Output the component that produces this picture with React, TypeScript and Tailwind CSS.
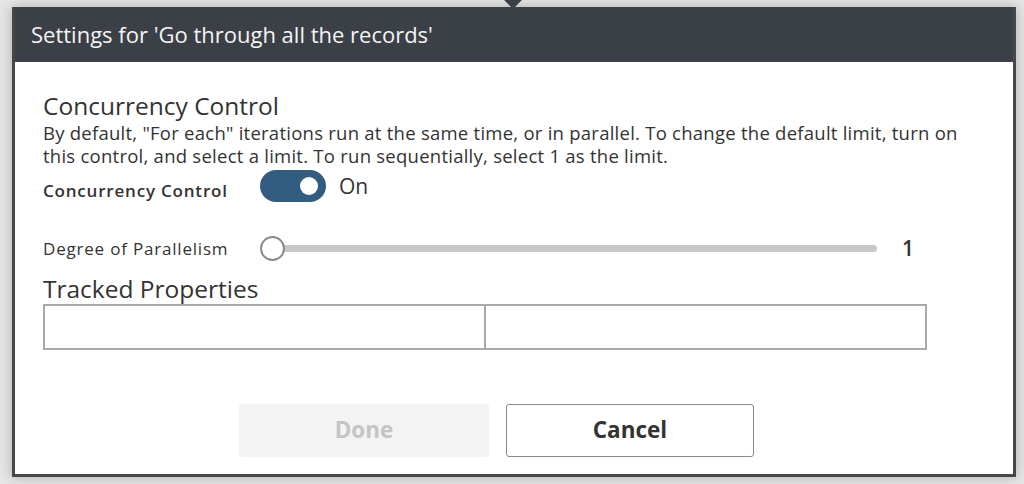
export default function App() {
  return (
    <div className="relative h-[484px] w-[1024px] overflow-hidden bg-[#e6e6e6] pl-[12px] pt-[7px] font-['Open_Sans',sans-serif] text-[#333]">
      {/* pointer above the dialog */}
      <div className="absolute left-[506px] top-[-8px] h-[14px] w-[14px] rotate-45 bg-[#3a3e45]" />
      <div className="flex h-[470px] w-[1004px] flex-col border-[3px] border-t-0 border-[#474747] bg-white shadow-[0_0_12px_rgba(0,0,0,0.25)]">
        <div className="flex h-[55px] shrink-0 items-center bg-[#3b3f46] pl-[16px] text-[22px] text-[#f4f4f4]">
          Settings for 'Go through all the records'
        </div>
        <div className="flex flex-1 flex-col pl-[28px] pr-[20px]">
          <h2 className="mt-[29px] text-[24.5px] leading-[30px]">Concurrency Control</h2>
          <p className="max-w-[945px] text-[18.5px] leading-[23px] tracking-[0.25px]">
            By default, "For each" iterations run at the same time, or in parallel. To change the default limit, turn on this control, and select a limit. To run sequentially, select 1 as the limit.
          </p>
          <div className="mt-[3px] flex h-[32px] w-[884px] items-center">
            <span className="w-[217px] pt-[8px] text-[17px] leading-[23px] font-semibold tracking-[0.8px]">Concurrency Control</span>
            <div className="flex h-[32px] w-[66px] items-center justify-end rounded-full bg-[#335c81] pr-[8px]">
              <div className="h-[18px] w-[18px] rounded-full bg-white" />
            </div>
            <span className="ml-[13px] pb-[1px] text-[21px] leading-[28px]">On</span>
          </div>
          <div className="mt-[31px] flex w-[884px] items-center">
            <span className="w-[217px] text-[17px] tracking-[0.8px]">Degree of Parallelism</span>
            <div className="relative flex flex-1 items-center">
              <div className="z-10 h-[25px] w-[25px] shrink-0 rounded-full border-2 border-[#8a8a8a] bg-white" />
              <div className="-ml-[3px] h-[7px] flex-1 rounded-full bg-[#c8c8c8]" />
            </div>
            <span className="ml-[25px] w-[25px] text-[21px] font-semibold">1</span>
          </div>
          <h2 className="mt-[9px] text-[24.5px] leading-[30px]">Tracked Properties</h2>
          <div className="flex h-[46px] w-[884px]">
            <div className="flex-1 border-2 border-[#a9a9a9]" />
            <div className="flex-1 border-2 border-l-0 border-[#a9a9a9]" />
          </div>
          <div className="mt-[54px] flex gap-[17px] pl-[196px]">
            <button className="h-[53px] w-[250px] rounded-[3px] bg-[#f3f3f3] text-[22.5px] font-bold text-[#c4c4c4]">
              Done
            </button>
            <button className="h-[53px] w-[248px] rounded-[3px] border border-[#8a8a8a] bg-white text-[22.5px] font-bold text-[#333]">
              Cancel
            </button>
          </div>
        </div>
      </div>
    </div>
  );
}
